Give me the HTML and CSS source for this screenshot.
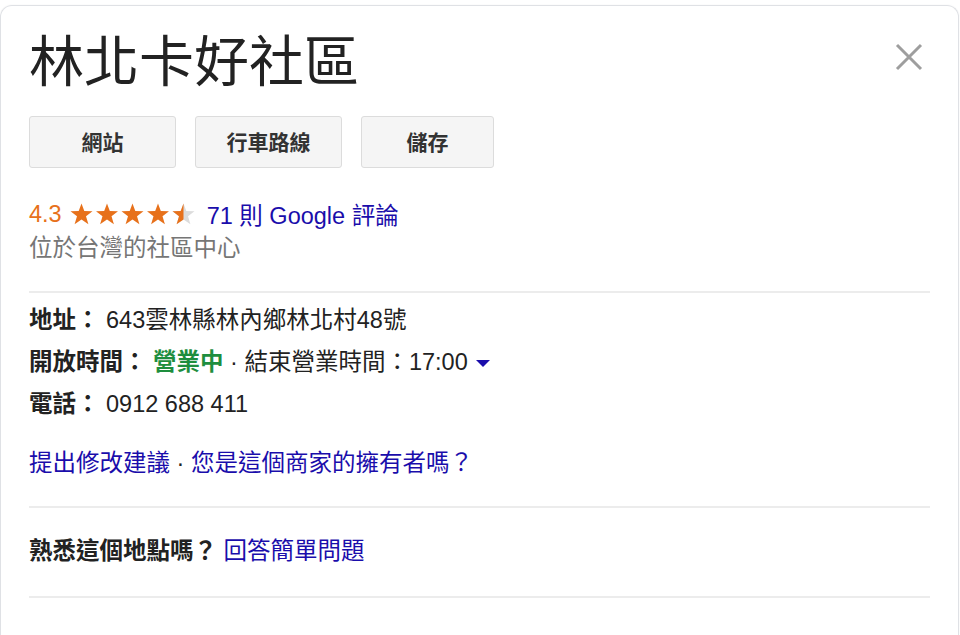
FILE: index.html
```html
<!DOCTYPE html>
<html lang="zh-Hant">
<head>
    <meta charset="UTF-8">
    <meta name="viewport" content="width=device-width, initial-scale=1.0">
    <title>林北卡好社區</title>
    <link rel="stylesheet" href="styles.css">
</head>
<body>

    <div class="card">
        <!-- Header -->
        <div class="header">
            <h1>林北卡好社區</h1>
            <span class="close" title="關閉">
                <svg width="28" height="28" viewBox="0 0 28 28">
                    <path d="M2 2 L26 26 M26 2 L2 26" stroke="#9e9e9e" stroke-width="3" fill="none"/>
                </svg>
            </span>
        </div>

        <div class="actions">
            <button class="btn btn-site">網站</button>
            <button class="btn btn-route">行車路線</button>
            <button class="btn btn-save">儲存</button>
        </div>

        <div class="rating">
            <span class="score">4.3</span>
            <svg class="stars" width="128" height="23" viewBox="0 0 128 23">
                <defs>
                    <path id="star" d="M11.5 0.5 L14.3 8 L22.5 8.2 L16 13.2 L18.4 21.2 L11.5 16.5 L4.6 21.2 L7 13.2 L0.5 8.2 L8.7 8 Z"/>
                    <clipPath id="half"><rect x="0" y="0" width="11.5" height="23"/></clipPath>
                </defs>
                <use href="#star" fill="#e7711b"/>
                <use href="#star" x="25.5" fill="#e7711b"/>
                <use href="#star" x="51" fill="#e7711b"/>
                <use href="#star" x="76.5" fill="#e7711b"/>
                <g transform="translate(102 0)">
                    <use href="#star" fill="#dcdcdc"/>
                    <use href="#star" fill="#e7711b" clip-path="url(#half)"/>
                </g>
            </svg>
            <a href="#" class="link">71 則 Google 評論</a>
        </div>
        <div class="category">位於台灣的社區中心</div>

        <hr>

        <div class="info">
            <div class="row"><span class="label">地址：</span> 643雲林縣林內鄉林北村48號</div>
            <div class="row">
                <span class="label">開放時間：</span>
                <span class="open">營業中</span> · 結束營業時間：17:00
                <svg class="caret" width="14" height="8" viewBox="0 0 14 8"><path d="M0 1 L14 1 L7 8 Z" fill="#1a0dab"/></svg>
            </div>
            <div class="row"><span class="label">電話：</span> 0912 688 411</div>
        </div>

        <div class="edit-links">
            <a href="#" class="link">提出修改建議</a> · <a href="#" class="link">您是這個商家的擁有者嗎？</a>
        </div>

        <hr>

        <div class="question">
            <span class="label">熟悉這個地點嗎？</span> <a href="#" class="link">回答簡單問題</a>
        </div>

        <hr>
    </div>

</body>
</html>
```

FILE: styles.css
```css
body {
    margin: 0;
    background: #fff;
    font-family: "Liberation Sans", Arial, "Noto Sans CJK TC", sans-serif;
    color: #222;
}
.card {
    position: relative;
    margin-top: 5px;
    width: 959px;
    height: 630px;
    box-sizing: border-box;
    padding: 19px 28px 0 28px;
    border: 1px solid #dfe1e5;
    border-bottom: none;
    border-radius: 12px 12px 0 0;
    box-shadow: 0 0 2px rgba(0, 0, 0, 0.06);
}
.header {
    display: flex;
    justify-content: space-between;
    align-items: center;
}
h1 {
    margin: 0;
    font-family: "Noto Sans CJK TC", sans-serif;
    font-size: 55px;
    font-weight: 400;
    line-height: 64px;
    color: #222;
}
.close {
    position: absolute;
    top: 37px;
    right: 35px;
    cursor: pointer;
}
.actions {
    display: flex;
    gap: 19px;
    margin-top: 27px;
}
.btn {
    height: 52px;
    border: 1px solid #dcdcdc;
    border-radius: 3px;
    background: #f5f5f5;
    font-family: "Liberation Sans", "Noto Sans CJK TC", sans-serif;
    font-size: 21px;
    font-weight: 700;
    color: #333;
    padding-bottom: 3px;
    cursor: pointer;
}
.btn-site, .btn-route {
    width: 147px;
}
.btn-save {
    width: 133px;
}
.rating {
    display: flex;
    align-items: center;
    margin-top: 29px;
    height: 34px;
    font-size: 23.5px;
}
.score {
    color: #e7711b;
}
.stars {
    margin: 0 9px 0 8px;
}
.link {
    color: #1a0dab;
    text-decoration: none;
}
.category {
    font-size: 23.5px;
    line-height: 34px;
    color: #767676;
}
hr {
    margin: 26px 0 0 0;
    border: none;
    border-top: 2px solid #ececec;
}
.info {
    margin-top: 6px;
}
.row {
    font-size: 23.5px;
    line-height: 42px;
}
.label {
    font-weight: 700;
}
.open {
    color: #1e8e3e;
    font-weight: 700;
}
.caret {
    margin-left: 2px;
    vertical-align: 3px;
}
.edit-links {
    margin-top: 17px;
    font-size: 23.5px;
    line-height: 42px;
}
.edit-links + hr {
    margin-top: 22px;
}
.question {
    margin-top: 22px;
    font-size: 23.5px;
    line-height: 42px;
}
.question + hr {
    margin-top: 24px;
}
```
